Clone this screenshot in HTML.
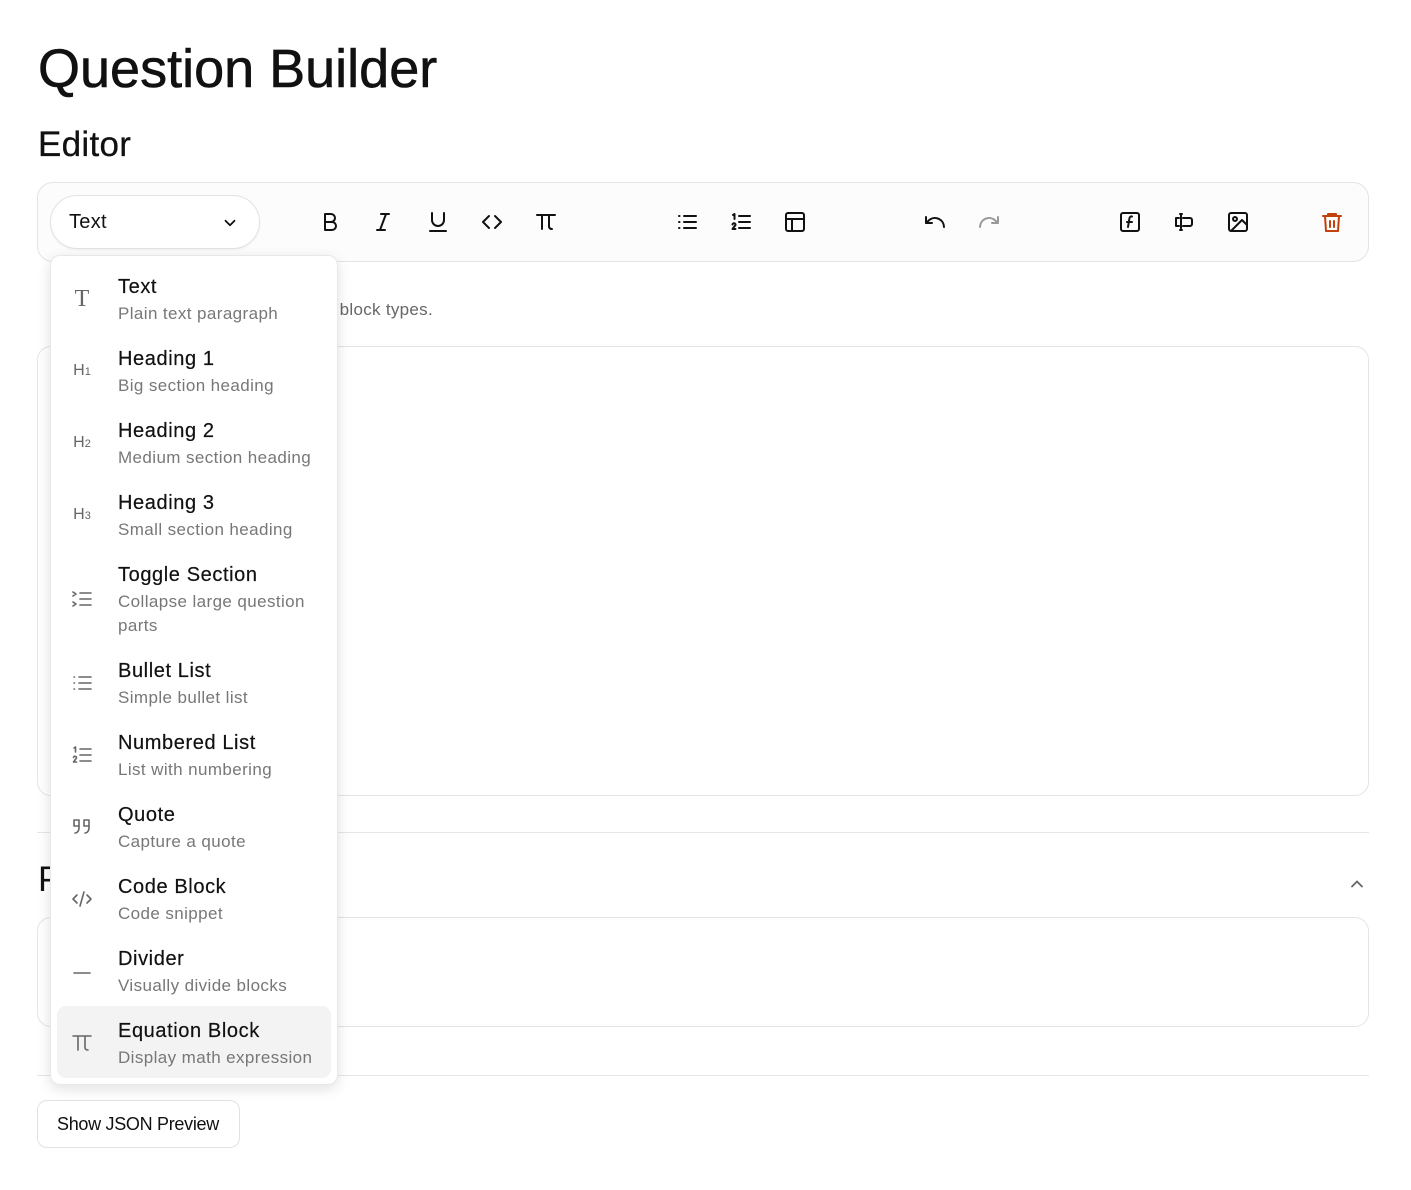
<!DOCTYPE html>
<html><head><meta charset="utf-8"><style>
*{box-sizing:border-box;margin:0;padding:0}
body{width:1411px;height:1190px;background:#fff;font-family:"Liberation Sans",sans-serif;color:#111;position:relative;overflow:hidden}
.abs{position:absolute}
h1{position:absolute;left:38px;top:38px;font-size:54px;font-weight:400;letter-spacing:0;color:#111;-webkit-text-stroke:0.6px #111}
h2{position:absolute;left:38px;top:125px;font-size:35px;font-weight:400;letter-spacing:0.3px;-webkit-text-stroke:0.3px #111}
.toolbar{left:37px;top:182px;width:1332px;height:80px;border:1px solid #e4e4e4;border-radius:16px;background:#fcfcfc}
.sel{left:50px;top:195px;width:210px;height:54px;border:1px solid #e2e2e2;border-radius:27px;background:#fff;box-shadow:0 1px 2px rgba(0,0,0,.05)}
.sel span{position:absolute;left:18px;top:15px;font-size:20px;letter-spacing:0.3px}
.ic{position:absolute;top:210px;width:24px;height:24px}
.ic svg{width:24px;height:24px;fill:none;stroke:#111;stroke-width:2;stroke-linecap:round;stroke-linejoin:round}
.box{border:1px solid #e4e4e4;border-radius:14px;background:#fff}
.hr{height:1px;background:#e6e6e6;left:37px;width:1332px}
.menu{left:50px;top:255px;width:288px;height:830px;background:#fff;border:1px solid #e8e8e8;border-radius:10px;box-shadow:0 4px 14px rgba(0,0,0,.12)}
.it{position:absolute;left:0;width:288px}
.it .t{position:absolute;left:67px;font-size:20px;color:#111;letter-spacing:0.6px;margin-top:2px;-webkit-text-stroke:0.2px #111}
.it .s{position:absolute;left:67px;font-size:17px;color:#777;line-height:24px;width:225px;letter-spacing:0.4px;margin-top:1px}
.it .i{position:absolute;left:19px;width:24px;height:24px;color:#666;font-size:16px;text-align:center}
.it .i svg{width:24px;height:24px;fill:none;stroke:#666;stroke-width:1.6;stroke-linecap:round;stroke-linejoin:round}
</style></head><body>
<h1>Question Builder</h1>
<h2>Editor</h2>
<div class="abs toolbar"></div>
<div class="abs sel"><span>Text</span>
<svg class="abs" style="left:170px;top:18px" width="18" height="18" viewBox="0 0 24 24" fill="none" stroke="#111" stroke-width="2.4" stroke-linecap="round" stroke-linejoin="round"><path d="M6 9l6 6 6-6"/></svg></div>

<div class="ic" style="left:318px"><svg viewBox="0 0 24 24"><path d="M7 4h6a4 4 0 010 8H7zM7 12h7a4 4 0 010 8H7z"/></svg></div>
<div class="ic" style="left:371px"><svg viewBox="0 0 24 24"><path d="M10 4h8M6 20h8M15 4L9 20"/></svg></div>
<div class="ic" style="left:426px"><svg viewBox="0 0 24 24"><path d="M6 3v7a6 6 0 0012 0V3M4 21h16"/></svg></div>
<div class="ic" style="left:480px"><svg viewBox="0 0 24 24"><path d="M9 6l-6 6 6 6M15 6l6 6-6 6"/></svg></div>
<div class="ic" style="left:534px"><svg viewBox="0 0 24 24"><path d="M3 5h18M8 5v14M15 5v12a3 3 0 003 2"/></svg></div>
<div class="ic" style="left:675px"><svg viewBox="0 0 24 24"><path d="M9 6h12M9 12h12M9 18h12M4 6h.5M4 12h.5M4 18h.5"/></svg></div>
<div class="ic" style="left:729px"><svg viewBox="0 0 24 24"><path d="M10 6h11M10 12h11M10 18h11M4 5l1.5-1v5M3.5 14.5a1.5 1.5 0 013 .5L3.5 19h3"/></svg></div>
<div class="ic" style="left:783px"><svg viewBox="0 0 24 24"><rect x="3" y="3" width="18" height="18" rx="2"/><path d="M3 9h18M9 9v12"/></svg></div>
<div class="ic" style="left:923px"><svg viewBox="0 0 24 24"><path d="M3 7v6h6"/><path d="M21 17a9 9 0 00-15-6.7L3 13"/></svg></div>
<div class="ic" style="left:977px"><svg viewBox="0 0 24 24" style="stroke:#999"><path d="M21 7v6h-6"/><path d="M3 17a9 9 0 0115-6.7L21 13"/></svg></div>
<div class="ic" style="left:1118px"><svg viewBox="0 0 24 24"><rect x="3" y="3" width="18" height="18" rx="2"/><path d="M10 17l1.5-9a2 2 0 012.5-1.5M9 12h5"/></svg></div>
<div class="ic" style="left:1172px"><svg viewBox="0 0 24 24"><path d="M10 4H8M10 20H8M9 4v16M11 8h7a2 2 0 012 2v4a2 2 0 01-2 2h-7M7 8H4v8h3"/></svg></div>
<div class="ic" style="left:1226px"><svg viewBox="0 0 24 24"><rect x="3" y="3" width="18" height="18" rx="2"/><circle cx="9" cy="9" r="2"/><path d="M21 15l-5-5L5 21"/></svg></div>
<div class="ic" style="left:1320px"><svg viewBox="0 0 24 24" style="stroke:#c2410c"><path d="M3 6h18M8 6V4h8v2M5 6l1 15h12l1-15M10 11v6M14 11v6"/></svg></div>

<div class="abs" style="right:978px;top:300px;font-size:17px;color:#666;white-space:nowrap;letter-spacing:0.3px">💡 Tip: type “/” in the editor to see block types.</div>
<div class="abs box" style="left:37px;top:346px;width:1332px;height:450px"></div>
<div class="abs hr" style="top:832px"></div>
<div class="abs" style="left:38px;top:860px;font-size:35px">Preview</div>
<svg class="abs" style="left:1347px;top:874px" width="20" height="20" viewBox="0 0 24 24" fill="none" stroke="#666" stroke-width="2.2" stroke-linecap="round"><path d="M6 15l6-6 6 6"/></svg>
<div class="abs box" style="left:37px;top:917px;width:1332px;height:110px"></div>
<div class="abs hr" style="top:1075px"></div>
<div class="abs" style="left:37px;top:1100px;width:203px;height:48px;border:1px solid #e2e2e2;border-radius:10px;font-size:18px;line-height:46px;padding-left:19px;letter-spacing:-0.3px">Show JSON Preview</div>

<div class="abs menu">
<div class="abs" style="left:6px;top:750px;width:274px;height:72px;background:#f3f3f3;border-radius:9px"></div>
<div class="it" style="top:7px"><div class="i" style="top:24px;font-family:'Liberation Serif',serif;font-size:24px;line-height:24px">T</div><div class="t" style="top:11px">Text</div><div class="s" style="top:38px">Plain text paragraph</div></div>
<div class="it" style="top:79px"><div class="i" style="top:27px">H<small style="font-size:11px">1</small></div><div class="t" style="top:11px">Heading 1</div><div class="s" style="top:38px">Big section heading</div></div>
<div class="it" style="top:151px"><div class="i" style="top:27px">H<small style="font-size:11px">2</small></div><div class="t" style="top:11px">Heading 2</div><div class="s" style="top:38px">Medium section heading</div></div>
<div class="it" style="top:223px"><div class="i" style="top:27px">H<small style="font-size:11px">3</small></div><div class="t" style="top:11px">Heading 3</div><div class="s" style="top:38px">Small section heading</div></div>
<div class="it" style="top:295px"><div class="i" style="top:36px"><svg viewBox="0 0 24 24"><path d="M3 5l3 2-3 2M3 15l3 2-3 2M10 6h11M10 12h11M10 18h11"/></svg></div><div class="t" style="top:11px">Toggle Section</div><div class="s" style="top:38px">Collapse large question parts</div></div>
<div class="it" style="top:391px"><div class="i" style="top:24px"><svg viewBox="0 0 24 24"><path d="M9 6h12M9 12h12M9 18h12M4 6h.5M4 12h.5M4 18h.5"/></svg></div><div class="t" style="top:11px">Bullet List</div><div class="s" style="top:38px">Simple bullet list</div></div>
<div class="it" style="top:463px"><div class="i" style="top:24px"><svg viewBox="0 0 24 24"><path d="M10 6h11M10 12h11M10 18h11M4 5l1.5-1v5M3.5 14.5a1.5 1.5 0 013 .5L3.5 19h3"/></svg></div><div class="t" style="top:11px">Numbered List</div><div class="s" style="top:38px">List with numbering</div></div>
<div class="it" style="top:535px"><div class="i" style="top:24px"><svg viewBox="0 0 24 24"><path d="M4 5h5v8c0 3-2 5-4 5M4 5v6h5M14 5h5v8c0 3-2 5-4 5M14 5v6h5"/></svg></div><div class="t" style="top:11px">Quote</div><div class="s" style="top:38px">Capture a quote</div></div>
<div class="it" style="top:607px"><div class="i" style="top:24px"><svg viewBox="0 0 24 24"><path d="M7 8l-4 4 4 4M17 8l4 4-4 4M14 5l-4 14"/></svg></div><div class="t" style="top:11px">Code Block</div><div class="s" style="top:38px">Code snippet</div></div>
<div class="it" style="top:679px"><div class="i" style="top:24px"><svg viewBox="0 0 24 24"><path d="M4 14h16"/></svg></div><div class="t" style="top:11px">Divider</div><div class="s" style="top:38px">Visually divide blocks</div></div>
<div class="it" style="top:751px"><div class="i" style="top:24px"><svg viewBox="0 0 24 24"><path d="M3 5h18M8 5v14M15 5v12a3 3 0 003 2"/></svg></div><div class="t" style="top:11px">Equation Block</div><div class="s" style="top:38px">Display math expression</div></div>
</div>
</body></html>
